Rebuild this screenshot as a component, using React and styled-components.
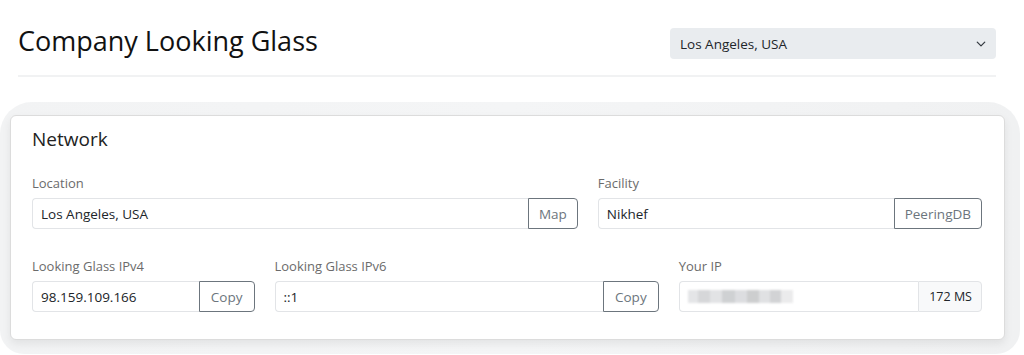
import React from 'react'
import styled, { createGlobalStyle } from 'styled-components'

const GlobalStyle = createGlobalStyle`
  * { box-sizing: border-box; }
  body {
    margin: 0;
    background: #fff;
    font-family: "Open Sans", "Noto Sans", sans-serif;
    color: #212529;
  }
`

const Page = styled.div`
  padding-top: 22px;
`

const Header = styled.header`
  display: flex;
  align-items: center;
  justify-content: space-between;
  margin: 0 28px 0 18px;
  padding-bottom: 16px;
  border-bottom: 2px solid #f1f2f3;
`

const Title = styled.h1`
  margin: 0;
  font-size: 27px;
  font-weight: 400;
  letter-spacing: 0;
  color: #111;
`

const SelectBox = styled.div`
  width: 326px;
  height: 31px;
  margin-top: 6px;
  display: flex;
  align-items: center;
  justify-content: space-between;
  padding: 0 10px 0 10px;
  background: #e9ecef;
  border-radius: 4px;
  font-size: 13.5px;
  color: #212529;
`

const Panel = styled.section`
  margin: 25px 4px 0 0;
  padding: 13px 15px 14px 10px;
  background: linear-gradient(90deg, #f2f3f4 0%, #f4f5f6 50%, #f0f1f2 100%);
  border-radius: 32px 32px 24px 24px;
`

const Card = styled.div`
  background: #fff;
  border: 1px solid #dcdcdc;
  border-radius: 6px;
  padding: 10px 22px 27px 21px;
  box-shadow: 0 4px 8px rgba(0, 0, 0, 0.07);
`

const CardTitle = styled.h2`
  margin: 0 0 22px;
  font-size: 19px;
  font-weight: 400;
  color: #222;
`

const Grid = styled.div`
  display: grid;
  grid-template-columns: repeat(12, 1fr);
  column-gap: 20px;
  row-gap: 28px;
`

const Field = styled.div`
  grid-column: span ${p => p.span};
  display: flex;
  flex-direction: column;
`

const Label = styled.label`
  font-size: 13px;
  color: #6b6b6b;
  margin-bottom: 6px;
  line-height: 18px;
`

const Group = styled.div`
  display: flex;
  height: 31px;
`

const Input = styled.div`
  flex: 1;
  display: flex;
  align-items: center;
  padding: 0 8px;
  border: 1px solid #e2e4e7;
  border-right: none;
  border-radius: 4px 0 0 4px;
  font-size: 13.5px;
  color: #212529;
  min-width: 0;
`

const Button = styled.button`
  font-family: inherit;
  font-size: 13.5px;
  color: #6c757d;
  background: #fff;
  border: 1px solid #6c757d;
  border-radius: 0 4px 4px 0;
  padding: 0 ${p => p.pad || 10}px;
  cursor: pointer;
`

const Addon = styled.div`
  display: flex;
  align-items: center;
  padding: 0 9px 0 10px;
  background: #f8f9fa;
  border: 1px solid #e2e4e7;
  border-radius: 0 4px 4px 0;
  font-size: 12.5px;
  color: #212529;
`

const Blur = styled.div`
  display: flex;
  filter: blur(1.2px);
  margin-left: 0;
`

const Blob = styled.span`
  display: block;
  width: ${p => p.w}px;
  height: 13px;
  background: ${p => p.c};
`

const Chevron = () => (
  <svg width="10" height="10" viewBox="0 0 16 16" fill="none">
    <path d="M2 5l6 6 6-6" stroke="#343a40" strokeWidth="2" strokeLinecap="round" strokeLinejoin="round" />
  </svg>
)

const blobs = [
  [10, '#e4e5e7'], [12, '#d6d7d9'], [12, '#e2e3e5'], [13, '#cfd1d3'],
  [12, '#dcdde0'], [12, '#cdcecf'], [11, '#e0e1e3'], [11, '#d2d3d5'], [12, '#ebebec'],
]

export default function App() {
  return (
    <Page>
      <GlobalStyle />
      <Header>
        <Title>Company Looking Glass</Title>
        <SelectBox>
          <span>Los Angeles, USA</span>
          <Chevron />
        </SelectBox>
      </Header>

      <Panel>
        <Card>
          <CardTitle>Network</CardTitle>
          <Grid>
            <Field span={7}>
              <Label>Location</Label>
              <Group>
                <Input>Los Angeles, USA</Input>
                <Button>Map</Button>
              </Group>
            </Field>
            <Field span={5}>
              <Label>Facility</Label>
              <Group>
                <Input>Nikhef</Input>
                <Button>PeeringDB</Button>
              </Group>
            </Field>
            <Field span={3}>
              <Label>Looking Glass IPv4</Label>
              <Group>
                <Input>98.159.109.166</Input>
                <Button pad={11}>Copy</Button>
              </Group>
            </Field>
            <Field span={5}>
              <Label>Looking Glass IPv6</Label>
              <Group>
                <Input>::1</Input>
                <Button pad={11}>Copy</Button>
              </Group>
            </Field>
            <Field span={4}>
              <Label>Your IP</Label>
              <Group>
                <Input>
                  <Blur>
                    {blobs.map(([w, c], i) => <Blob key={i} w={w} c={c} />)}
                  </Blur>
                </Input>
                <Addon>172 MS</Addon>
              </Group>
            </Field>
          </Grid>
        </Card>
      </Panel>
    </Page>
  )
}
